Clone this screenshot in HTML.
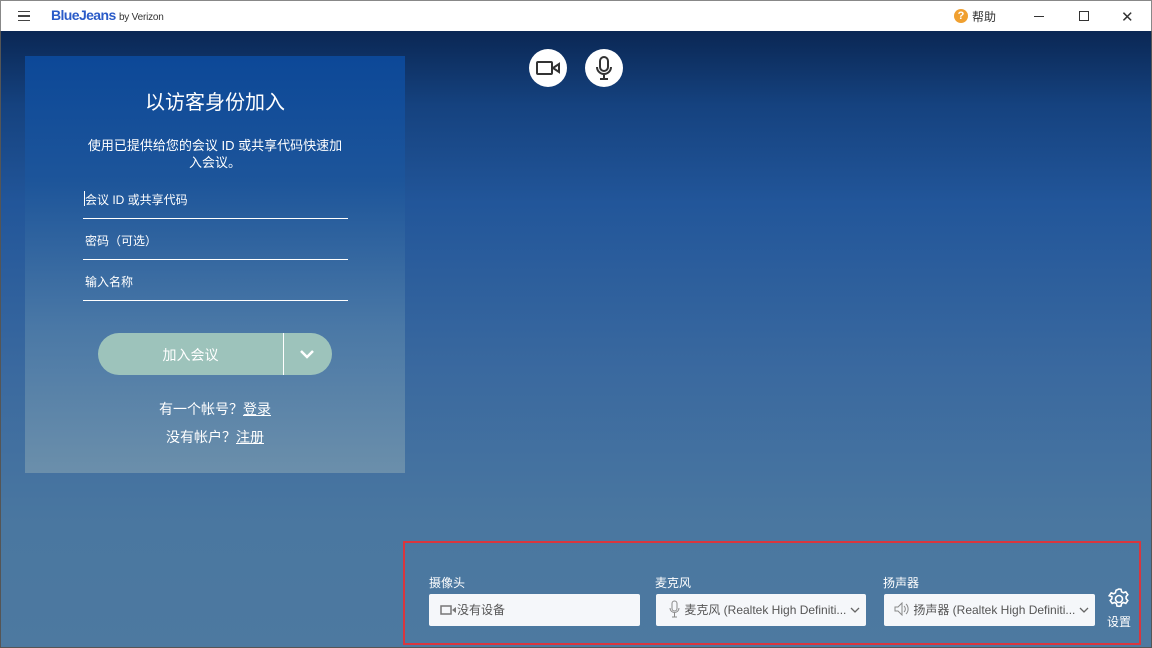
<!DOCTYPE html>
<html><head><meta charset="utf-8"><style>
*{margin:0;padding:0;box-sizing:border-box}
body{width:1152px;height:648px;overflow:hidden;font-family:"Liberation Sans","Noto Sans CJK SC",sans-serif;position:relative;background:#fff}
.top{position:absolute;left:0;top:0;width:1152px;height:31px;background:#fff;border:1px solid #888;border-bottom:none}
.main{position:absolute;left:0;top:31px;width:1152px;height:617px;background:linear-gradient(180deg,#0a2754 0%,#15427f 12%,#22569a 28%,#3a699f 55%,#4a77a0 80%,#4d79a0 100%);border-left:1px solid #555;border-right:1px solid #555;border-bottom:1px solid #555}
.panel{position:absolute;left:25px;top:56px;width:380px;height:417px;background:linear-gradient(180deg,#0c4898 0%,#1d559a 30%,#4a78a6 65%,#6b8fab 100%)}
.t{position:absolute;color:#fff;white-space:nowrap}
.line{position:absolute;left:83px;width:265px;height:1px;background:#fff}
.circ{position:absolute;width:38px;height:38px;border-radius:50%;background:#fff;top:49px}
.sel{position:absolute;top:594px;height:32px;background:#f5f7fa;border-radius:2px;font-size:12px;color:#555;line-height:32px}
.chev{position:absolute;right:6px;top:12px}
</style></head><body>
<div class="top">
  <div style="position:absolute;left:17px;top:10px;width:12px;height:10px;border-top:1.5px solid #444;border-bottom:1.5px solid #444"><div style="margin-top:3px;height:1.5px;background:#444"></div></div>
  <div style="position:absolute;left:50px;top:6px;font-size:14px;font-weight:bold;color:#2a5bc8;letter-spacing:-0.6px">BlueJeans <span style="font-size:10px;font-weight:normal;color:#333;letter-spacing:-0.2px">by Verizon</span></div>
  <div style="position:absolute;left:953px;top:8px;width:14px;height:14px;border-radius:50%;background:#f0a030;color:#fff;font-size:11px;font-weight:bold;text-align:center;line-height:14px">?</div>
  <div style="position:absolute;left:971px;top:7px;font-size:12px;color:#333">帮助</div>
  <div style="position:absolute;left:1033px;top:15px;width:10px;height:1px;background:#333"></div>
  <div style="position:absolute;left:1078px;top:10px;width:10px;height:10px;border:1px solid #333"></div>
  <div style="position:absolute;left:1120px;top:7px;font-size:15px;color:#333">✕</div>
</div>
<div class="main"></div>
<div class="panel"></div>
<div class="t" style="left:25px;width:380px;text-align:center;top:86px;font-size:20px">以访客身份加入</div>
<div class="t" style="left:25px;width:380px;text-align:center;top:137px;font-size:13px;line-height:17px;white-space:normal;padding:0 40px">使用已提供给您的会议 ID 或共享代码快速加<br>入会议。</div>
<div class="t" style="left:85px;top:191px;font-size:12px">会议 ID 或共享代码</div>
<div style="position:absolute;left:84px;top:191px;width:1px;height:15px;background:#fff"></div>
<div class="line" style="top:218px"></div>
<div class="t" style="left:85px;top:232px;font-size:12px">密码（可选）</div>
<div class="line" style="top:259px"></div>
<div class="t" style="left:85px;top:273px;font-size:12px">输入名称</div>
<div class="line" style="top:300px"></div>
<div style="position:absolute;left:98px;top:333px;width:234px;height:42px;border-radius:21px;background:#9dc3bb"></div>
<div style="position:absolute;left:283px;top:333px;width:1px;height:42px;background:#fff"></div>
<div class="t" style="left:98px;width:185px;text-align:center;top:345px;font-size:14px">加入会议</div>
<svg style="position:absolute;left:299px;top:348px" width="16" height="12"><path d="M2 3l6 6 6-6" stroke="#fff" stroke-width="2.5" fill="none"/></svg>
<div class="t" style="left:25px;width:380px;text-align:center;top:399px;font-size:14px">有一个帐号？<u>登录</u></div>
<div class="t" style="left:25px;width:380px;text-align:center;top:427px;font-size:14px">没有帐户？<u>注册</u></div>
<div class="circ" style="left:529px"></div>
<svg style="position:absolute;left:535px;top:58px" width="28" height="20"><rect x="2" y="4" width="15" height="12" rx="1" stroke="#333" stroke-width="2" fill="none"/><path d="M18 10l6-4v8z" stroke="#333" stroke-width="2" fill="none"/></svg>
<div class="circ" style="left:585px"></div>
<svg style="position:absolute;left:594px;top:55px" width="20" height="28"><rect x="6" y="2" width="8" height="14" rx="4" stroke="#333" stroke-width="2" fill="none"/><path d="M3 12a7 7 0 0014 0M10 19v5M6 24h8" stroke="#333" stroke-width="2" fill="none"/></svg>
<div style="position:absolute;left:403px;top:541px;width:738px;height:104px;border:2px solid #d9363e"></div>
<div class="t" style="left:429px;top:574px;font-size:12px">摄像头</div>
<div class="t" style="left:655px;top:574px;font-size:12px">麦克风</div>
<div class="t" style="left:883px;top:574px;font-size:12px">扬声器</div>
<div class="sel" style="left:429px;width:211px;padding-left:11px">
<svg width="17" height="10" style="vertical-align:-1px"><rect x="1" y="1" width="10" height="8" stroke="#777" stroke-width="1.5" fill="none"/><path d="M12 5l4-3v6z" fill="#777"/></svg>没有设备</div>
<div class="sel" style="left:656px;width:210px;padding-left:13px">
<svg width="12" height="18" style="vertical-align:-4px"><rect x="3" y="1" width="5" height="10" rx="2.5" stroke="#888" fill="none"/><path d="M1 8a4.5 4.5 0 009 0M5.5 13v4M3 17h5" stroke="#888" fill="none"/></svg> 麦克风 (Realtek High Definiti...<svg class="chev" width="10" height="8"><path d="M1 2l4 4 4-4" stroke="#666" stroke-width="1.3" fill="none"/></svg></div>
<div class="sel" style="left:884px;width:211px;padding-left:10px">
<svg width="16" height="14" style="vertical-align:-2px"><path d="M1 5h3l4-4v12l-4-4H1z" stroke="#888" fill="none"/><path d="M10 4a4 4 0 010 6M12 2a7 7 0 010 10" stroke="#888" fill="none"/></svg> 扬声器 (Realtek High Definiti...<svg class="chev" width="10" height="8"><path d="M1 2l4 4 4-4" stroke="#666" stroke-width="1.3" fill="none"/></svg></div>
<svg style="position:absolute;left:1107px;top:587px" width="24" height="24" viewBox="0 0 24 24"><path d="M12 2l2 .3.6 2.5 1.8 1 2.4-.9 2 2.8-1.7 1.9v2.1l1.7 1.9-2 2.8-2.4-.9-1.8 1-.6 2.5-2 .3-2-.3-.6-2.5-1.8-1-2.4.9-2-2.8 1.7-1.9v-2.1L2.2 8.7l2-2.8 2.4.9 1.8-1 .6-2.5z" stroke="#fff" stroke-width="1.6" fill="none"/><circle cx="12" cy="12" r="3.5" stroke="#fff" stroke-width="1.6" fill="none"/></svg>
<div class="t" style="left:1107px;top:613px;font-size:12px">设置</div>
</body></html>
